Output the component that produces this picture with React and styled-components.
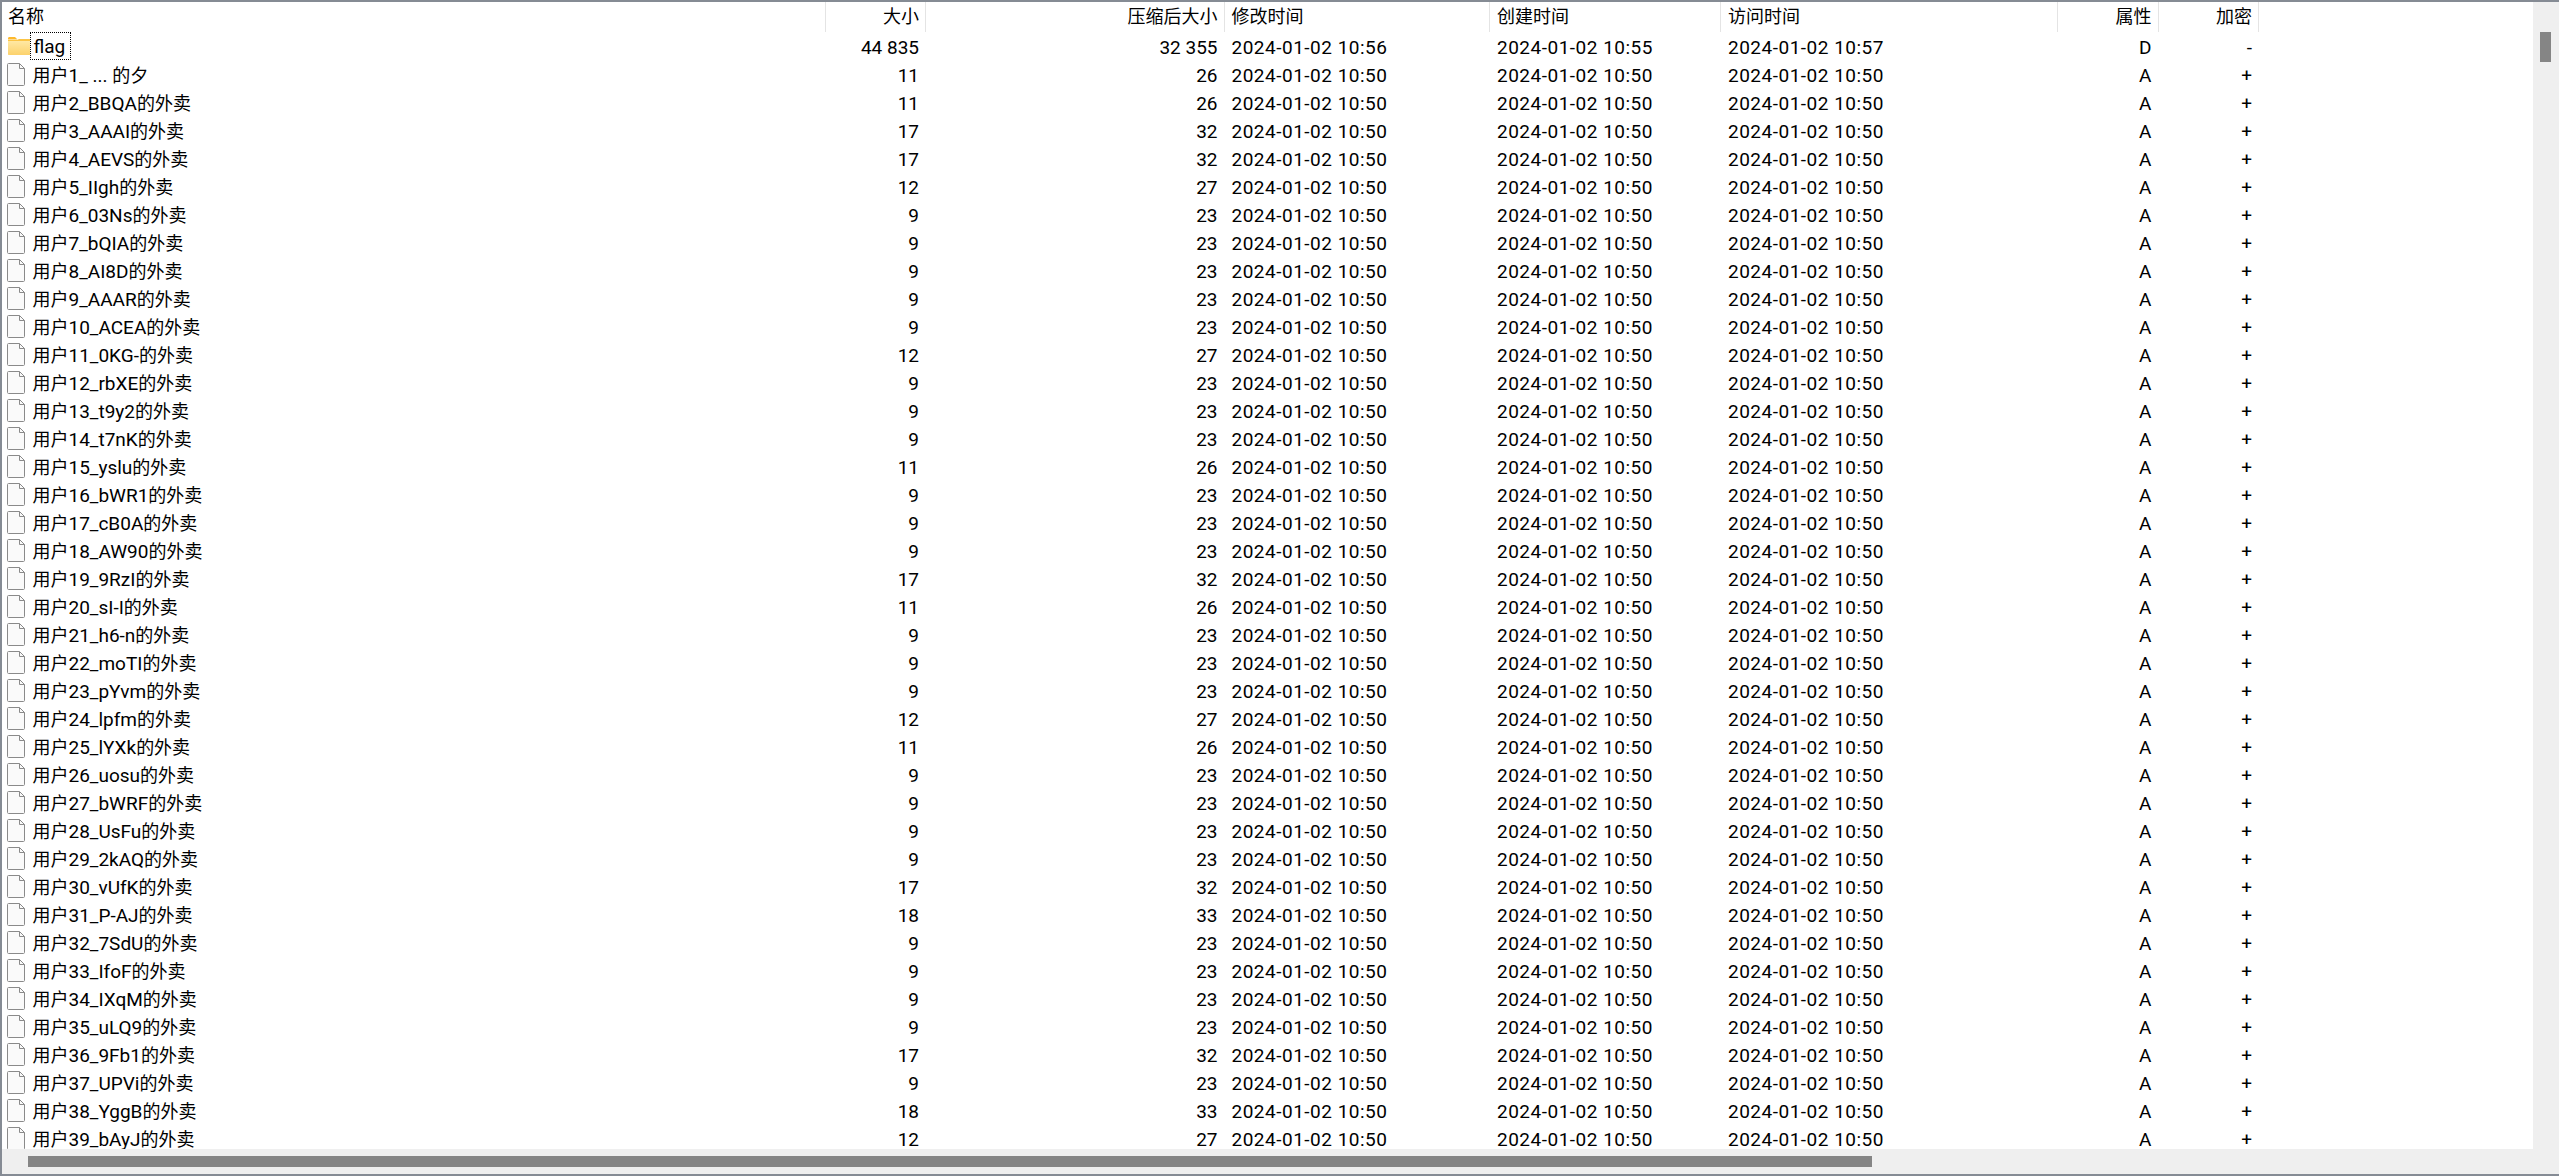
import React from "react";
import styled, { createGlobalStyle } from "styled-components";

const COLUMNS = "824px 100px 298.5px 265.5px 231px 337px 100.5px 100.5px 1fr";

const Global = createGlobalStyle`
  html, body { margin: 0; padding: 0; background: #fff; overflow: hidden; }
  #root { width: 2559px; height: 1176px; }
`;

const Frame = styled.div`
  box-sizing: border-box;
  width: 2559px;
  height: 1176px;
  display: flex;
  border-top: 2px solid #858b94;
  border-bottom: 2px solid #858b94;
  border-left: 2px solid #858b94;
  background: #fff;
  color: #000;
  font-family: Roboto, "Noto Sans CJK SC", sans-serif;
  font-size: 19px;
`;

const Body = styled.div`
  flex: 1;
  min-width: 0;
  display: flex;
  flex-direction: column;
`;

const ListArea = styled.div`
  flex: 1;
  min-height: 0;
  overflow: hidden;
`;

const HeaderRow = styled.div`
  display: grid;
  grid-template-columns: ${COLUMNS};
  height: 30px;
`;

const HeaderCell = styled.div`
  box-sizing: border-box;
  height: 30px;
  line-height: 30px;
  font-size: 18px;
  padding: 0 ${(p) => (p.$right ? "6px" : "0")} 0 ${(p) => (p.$first ? "6px" : "7px")};
  text-align: ${(p) => (p.$right ? "right" : "left")};
  border-right: 1px solid #e4e4e4;
  white-space: nowrap;
`;

const Row = styled.div`
  display: grid;
  grid-template-columns: ${COLUMNS};
  grid-auto-rows: 28px;
  height: 28px;
  line-height: 28px;
`;

const NameCell = styled.div`
  display: flex;
  align-items: flex-start;
  height: 28px;
  white-space: nowrap;
`;

const IconSlot = styled.span`
  width: 28px;
  height: 28px;
  flex: none;
  display: flex;
  align-items: center;
  justify-content: ${(p) => (p.$folder ? "flex-end" : "center")};
`;

const NameText = styled.span`
  margin-left: 2.5px;
  padding-top: 1.5px;
`;

const Han = styled.span`
  font-size: 18px;
`;

const FocusedName = styled.span`
  box-sizing: border-box;
  display: block;
  height: 28px;
  width: 41px;
  line-height: 28px;
  padding-left: 2.5px;
  border: 1px dotted #000;
`;

const Cell = styled.div`
  box-sizing: border-box;
  padding: 1.5px ${(p) => (p.$right ? "7px" : "0")} 0 ${(p) => (p.$right ? "0" : "7px")};
  text-align: ${(p) => (p.$right ? "right" : "left")};
  white-space: nowrap;
`;

const DateCell = styled(Cell)`
  letter-spacing: 0.5px;
`;

const HTrack = styled.div`
  height: 25px;
  flex: none;
  background: #efefef;
  display: flex;
  align-items: center;
  padding-left: 26px;
`;

const HThumb = styled.div`
  width: 1844px;
  height: 11px;
  background: #858585;
`;

const VTrack = styled.div`
  width: 26px;
  flex: none;
  background: #efefef;
  padding: 30px 0 0 7px;
  box-sizing: border-box;
`;

const VThumb = styled.div`
  width: 11px;
  height: 30px;
  background: #858585;
`;

const FolderIcon = () => (
  <svg width="22" height="18" viewBox="0 0 22 18">
    <defs>
      <linearGradient id="folderBody" x1="0" y1="0" x2="0" y2="1">
        <stop offset="0" stopColor="#ffeaa8" />
        <stop offset="1" stopColor="#fcd26c" />
      </linearGradient>
    </defs>
    <path d="M0 1.5C0 .7.6 0 1.4 0H7l2.5 2.5H0z" fill="#fdb92c" />
    <path d="M0 3h22v15H1c-.6 0-1-.4-1-1z" fill="url(#folderBody)" />
    <path d="M0 3h9l2-1h11v2H0z" fill="#fbc445" />
  </svg>
);

const FileIcon = () => (
  <svg width="18" height="23" viewBox="0 0 18 23">
    <path
      d="M.5 1.5C.5.9.9.5 1.5.5H12.5L17.5 5.5V21.5C17.5 22.1 17.1 22.5 16.5 22.5H1.5C.9 22.5.5 22.1.5 21.5z"
      fill="#fafafa"
      stroke="#8a8a8a"
    />
    <path d="M12.5.5V5.5H17.5" fill="none" stroke="#8a8a8a" />
  </svg>
);

const HEADERS = [
  { label: "名称", first: true },
  { label: "大小", right: true },
  { label: "压缩后大小", right: true },
  { label: "修改时间" },
  { label: "创建时间" },
  { label: "访问时间" },
  { label: "属性", right: true },
  { label: "加密", right: true },
];

const FILES = [
  ["2_BBQA", 11, 26], ["3_AAAI", 17, 32], ["4_AEVS", 17, 32],
  ["5_IIgh", 12, 27], ["6_03Ns", 9, 23], ["7_bQIA", 9, 23], ["8_AI8D", 9, 23],
  ["9_AAAR", 9, 23], ["10_ACEA", 9, 23], ["11_0KG-", 12, 27], ["12_rbXE", 9, 23],
  ["13_t9y2", 9, 23], ["14_t7nK", 9, 23], ["15_yslu", 11, 26], ["16_bWR1", 9, 23],
  ["17_cB0A", 9, 23], ["18_AW90", 9, 23], ["19_9RzI", 17, 32], ["20_sI-I", 11, 26],
  ["21_h6-n", 9, 23], ["22_moTI", 9, 23], ["23_pYvm", 9, 23], ["24_lpfm", 12, 27],
  ["25_lYXk", 11, 26], ["26_uosu", 9, 23], ["27_bWRF", 9, 23], ["28_UsFu", 9, 23],
  ["29_2kAQ", 9, 23], ["30_vUfK", 17, 32], ["31_P-AJ", 18, 33], ["32_7SdU", 9, 23],
  ["33_IfoF", 9, 23], ["34_IXqM", 9, 23], ["35_uLQ9", 9, 23], ["36_9Fb1", 17, 32],
  ["37_UPVi", 9, 23], ["38_YggB", 18, 33], ["39_bAyJ", 12, 27],
];

const STAMP = "2024-01-02 10:50";

const FileRow = ({ name, size, packed }) => (
  <Row>
    <NameCell>
      <IconSlot>
        <FileIcon />
      </IconSlot>
      <NameText>{name}</NameText>
    </NameCell>
    <Cell $right>{size}</Cell>
    <Cell $right>{packed}</Cell>
    <DateCell>{STAMP}</DateCell>
    <DateCell>{STAMP}</DateCell>
    <DateCell>{STAMP}</DateCell>
    <Cell $right>A</Cell>
    <Cell $right>+</Cell>
  </Row>
);

export default function App() {
  return (
    <Frame>
      <Global />
      <Body>
        <ListArea>
          <HeaderRow>
            {HEADERS.map((h) => (
              <HeaderCell key={h.label} $right={h.right} $first={h.first}>
                {h.label}
              </HeaderCell>
            ))}
          </HeaderRow>
          <Row>
            <NameCell>
              <IconSlot $folder>
                <FolderIcon />
              </IconSlot>
              <FocusedName>flag</FocusedName>
            </NameCell>
            <Cell $right>44 835</Cell>
            <Cell $right>32 355</Cell>
            <DateCell>2024-01-02 10:56</DateCell>
            <DateCell>2024-01-02 10:55</DateCell>
            <DateCell>2024-01-02 10:57</DateCell>
            <Cell $right>D</Cell>
            <Cell $right>-</Cell>
          </Row>
          <FileRow
            size={11}
            packed={26}
            name={
              <>
                <Han>用户</Han>1_ ... <Han>的夕</Han>
              </>
            }
          />
          {FILES.map(([suffix, size, packed]) => (
            <FileRow
              key={suffix}
              size={size}
              packed={packed}
              name={
                <>
                  <Han>用户</Han>
                  {suffix}
                  <Han>的外卖</Han>
                </>
              }
            />
          ))}
        </ListArea>
        <HTrack>
          <HThumb />
        </HTrack>
      </Body>
      <VTrack>
        <VThumb />
      </VTrack>
    </Frame>
  );
}
